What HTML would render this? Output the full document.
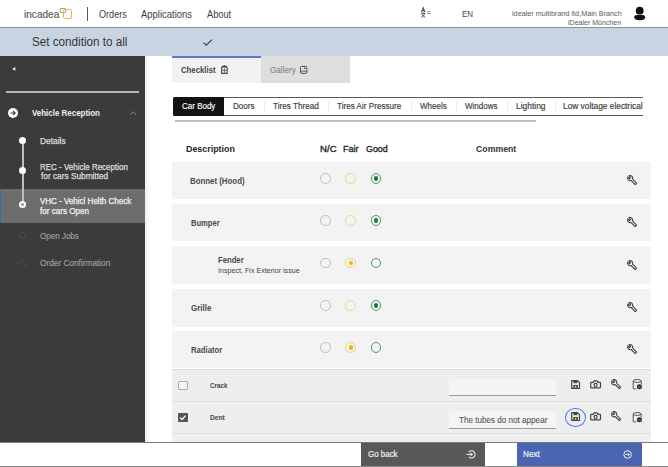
<!DOCTYPE html>
<html><head><meta charset="utf-8">
<style>
*{box-sizing:border-box;margin:0;padding:0}
html,body{width:668px;height:467px;overflow:hidden;background:#fff;font-family:"Liberation Sans",sans-serif;color:#333;position:relative}
.a{position:absolute}
.t{position:absolute;white-space:nowrap;line-height:1;transform-origin:0 0}
.row{position:absolute;left:172px;width:479px;background:#f3f3f3}
.radio{position:absolute;width:10.7px;height:10.7px;border-radius:50%;border:1.25px solid #bdbdbd}
.rg{border-color:#4a9f68}
.ry{border-color:#f0d47e}
.dot{position:absolute;left:2.3px;top:2.3px;width:4.6px;height:4.6px;border-radius:50%}
.sep{position:absolute;top:100.5px;width:1px;height:11px;background:#ebebeb}
svg{position:absolute;overflow:visible}
</style></head>
<body>
<!-- header -->
<div class="a" style="left:0;top:0;width:668px;height:27px;background:#fff"></div>
<div class="a" style="left:0;top:27px;width:668px;height:1px;background:#87919b"></div>
<div class="a" style="left:60px;top:7.6px;width:6px;height:5.2px;border:1px solid #a0a0a0;border-radius:1px"></div>
<div class="a" style="left:62.8px;top:9.3px;width:9.2px;height:9.4px;border:1.5px solid #f5b13c;border-radius:1.8px"></div>
<div class="a" style="left:87px;top:7px;width:1px;height:14px;background:#5a5a5a"></div>
<svg style="left:418px;top:5px" width="16" height="15" viewBox="418 5 16 15">
 <path d="M421.5 12 L423.2 7.8 L424.9 12 M422.2 10.6 H424.2" stroke="#505050" stroke-width="1.1" fill="none"/>
 <path d="M421.2 13.3 H425.3 M423.2 12.6 V13.3 M424.5 13.5 C424.1 15.5 423 16.6 421.3 17.3 M422 14.2 C422.6 15.6 423.6 16.6 425.3 17.3" stroke="#505050" stroke-width="1" fill="none"/>
 <path d="M427 11.7 H430.8 M427 13.5 H430.8" stroke="#777" stroke-width="0.8" fill="none"/>
</svg>
<svg style="left:630px;top:4px" width="20" height="20" viewBox="630 4 20 20"><circle cx="639.7" cy="10.7" r="3.9" fill="#111"/><path d="M634.2 17.3 Q634.2 15.1 637.2 15.1 H642.2 Q645.2 15.1 645.2 17.3 Q645.2 20.2 639.7 20.2 Q634.2 20.2 634.2 17.3Z" fill="#111"/></svg>

<!-- subheader -->
<div class="a" style="left:0;top:28px;width:668px;height:28px;background:#c9d4e2"></div>
<svg style="left:202.5px;top:38.5px" width="9.5" height="7" viewBox="0 0 9.5 7"><path d="M0.6 3.6 L3.3 6.2 L9 0.6" stroke="#3a3a3a" stroke-width="1.1" fill="none"/></svg>

<!-- sidebar -->
<div class="a" style="left:0;top:56px;width:145px;height:387px;background:#3b3b3b"></div>
<div class="a" style="left:0;top:442px;width:145px;height:1px;background:#1e1e1e"></div>
<div class="a" style="left:145px;top:56px;width:5px;height:387px;background:linear-gradient(to right,rgba(0,0,0,0.07),rgba(0,0,0,0))"></div>
<svg style="left:12px;top:67px" width="4" height="4" viewBox="0 0 4 4"><path d="M3.3 0 L0.2 1.9 L3.3 3.8Z" fill="#eee"/></svg>
<div class="a" style="left:6px;top:91.2px;width:133px;height:1.8px;background:#b8b8b8"></div>
<svg style="left:8px;top:107.8px" width="10" height="10" viewBox="0 0 10 10"><circle cx="5" cy="5" r="5" fill="#fff"/><path d="M2.4 5 H7.2 M5.1 2.9 L7.2 5 L5.1 7.1" stroke="#3b3b3b" stroke-width="1.1" fill="none"/></svg>
<svg style="left:130px;top:110.5px" width="7" height="4" viewBox="0 0 7 4"><path d="M0.6 3.4 L3.3 0.8 L6 3.4" stroke="#9a9a9a" stroke-width="0.9" fill="none"/></svg>

<div class="a" style="left:0;top:189px;width:145px;height:33.6px;background:#6d6d6d"></div>
<div class="a" style="left:0;top:189px;width:1.2px;height:33.6px;background:#2a6db5"></div>
<div class="a" style="left:21.5px;top:140px;width:2.1px;height:64px;background:#bdbdbd"></div>
<div class="a" style="left:18.8px;top:136.6px;width:7.4px;height:7.4px;border-radius:50%;background:#fff"></div>
<div class="a" style="left:18.8px;top:167px;width:7.4px;height:7.4px;border-radius:50%;background:#fff"></div>
<div class="a" style="left:19px;top:201.3px;width:7.2px;height:7.2px;border-radius:50%;background:#fff"></div>
<div class="a" style="left:21.1px;top:203.4px;width:3px;height:3px;border-radius:50%;background:#9a9a9a"></div>
<div class="a" style="left:19.2px;top:231.8px;width:7px;height:7px;border-radius:50%;border:1.3px solid #535353"></div>
<div class="a" style="left:19.2px;top:259.6px;width:7px;height:7px;border-radius:50%;border:1.3px dashed #535353"></div>

<!-- tabs -->
<div class="a" style="left:172px;top:56px;width:89px;height:27.4px;background:#f2f2f2"></div>
<div class="a" style="left:172px;top:56px;width:89px;height:1.7px;background:#5d7ac8"></div>
<svg style="left:219px;top:64px" width="11" height="11" viewBox="219 64 11 11"><path d="M221.6 73.4 V68.2 Q221.6 66 224.4 66 Q227.2 66 227.2 68.2 V73.4 Z" stroke="#4a4a4a" stroke-width="1.1" fill="none"/><path d="M222.4 67.2 Q224.4 65.6 226.4 67.2" stroke="#333" stroke-width="1.3" fill="none"/><path d="M224.4 67.5 V73.2 M221.8 70.2 H227" stroke="#555" stroke-width="0.8" fill="none"/></svg>
<div class="a" style="left:261px;top:56px;width:89px;height:27.4px;background:#dedede"></div>
<svg style="left:298px;top:64px" width="11" height="11" viewBox="298 64 11 11"><rect x="300.5" y="66.4" width="6.3" height="6.9" rx="1" stroke="#444" stroke-width="0.95" fill="none"/><circle cx="304.6" cy="68.3" r="0.75" fill="#333"/><path d="M300.8 72.3 L302.5 70.7 L304 71.7 L305.2 71 L306.5 71.9" stroke="#555" stroke-width="0.9" fill="none"/></svg>

<!-- chip bar -->
<div class="a" style="left:172.5px;top:97px;width:470px;height:18.6px;border-top:1px solid #5a5a5a;border-bottom:1px solid #5a5a5a;border-left:1px solid #5a5a5a;border-radius:2px 0 0 2px"></div>
<div class="a" style="left:172.5px;top:97px;width:51.5px;height:18.6px;background:#131313;border-radius:2px 0 0 2px"></div>
<div class="sep" style="left:264px"></div>
<div class="sep" style="left:327.5px"></div>
<div class="sep" style="left:411px"></div>
<div class="sep" style="left:456px"></div>
<div class="sep" style="left:507px"></div>
<div class="sep" style="left:554.5px"></div>
<div class="a" style="left:175px;top:120.3px;width:360.5px;height:1.6px;background:#bcbcbc"></div>

<!-- rows -->
<div class="row" style="top:162px;height:37px"></div>
<div class="row" style="top:204px;height:37px"></div>
<div class="row" style="top:246px;height:37.5px"></div>
<div class="row" style="top:289px;height:37.5px"></div>
<div class="row" style="top:331.2px;height:37px"></div>
<div class="a" style="left:172px;top:368.5px;width:479px;height:74.5px;background:#eeeeef"></div>
<div class="a" style="left:172px;top:368.5px;width:479px;height:1px;background:#dddddd"></div>
<div class="a" style="left:172px;top:401px;width:479px;height:1px;background:#dddddd"></div>
<div class="a" style="left:172px;top:433px;width:479px;height:1px;background:#dddddd"></div>

<!-- radios -->
<div class="radio" style="left:320.3px;top:173px"></div>
<div class="radio ry" style="left:345.4px;top:173px"></div>
<div class="radio rg" style="left:370.6px;top:173px"><div class="dot" style="background:#1f7a3c"></div></div>
<div class="radio" style="left:320.3px;top:215px"></div>
<div class="radio ry" style="left:345.4px;top:215px"></div>
<div class="radio rg" style="left:370.6px;top:215px"><div class="dot" style="background:#1f7a3c"></div></div>
<div class="radio" style="left:320.3px;top:257.5px"></div>
<div class="radio ry" style="left:345.4px;top:257.5px"><div class="dot" style="background:#f1b600"></div></div>
<div class="radio rg" style="left:370.6px;top:257.5px"></div>
<div class="radio" style="left:320.3px;top:300px"></div>
<div class="radio ry" style="left:345.4px;top:300px"></div>
<div class="radio rg" style="left:370.6px;top:300px"><div class="dot" style="background:#1f7a3c"></div></div>
<div class="radio" style="left:320.3px;top:342px"></div>
<div class="radio ry" style="left:345.4px;top:342px"><div class="dot" style="background:#f1b600"></div></div>
<div class="radio rg" style="left:370.6px;top:342px"></div>


<!-- checkboxes -->
<div class="a" style="left:178.3px;top:380.9px;width:9.6px;height:8.8px;border:1.2px solid #acacac;border-radius:1px;background:#f4f4f4"></div>
<div class="a" style="left:178.3px;top:413px;width:9.6px;height:9px;background:#555;border-radius:1px"></div>
<svg style="left:178.3px;top:413px" width="9.6" height="9" viewBox="0 0 9.6 9"><path d="M2 4.6 L4 6.5 L7.6 2.6" stroke="#fff" stroke-width="1.3" fill="none"/></svg>

<!-- inputs -->
<div class="a" style="left:448.5px;top:379px;width:107.5px;height:17px;background:#f5f5f5;border-bottom:1px solid #9a9a9a"></div>
<div class="a" style="left:448.5px;top:411px;width:107.5px;height:17.5px;background:#f5f5f5;border-bottom:1px solid #9a9a9a"></div>

<!-- blue focus ring -->
<div class="a" style="left:565px;top:408px;width:20.5px;height:19px;border:1.8px solid #3b7ff0;border-radius:50%"></div>

<!-- ICONS -->
<svg style="left:627px;top:175.0px" width="10.3" height="10.3" viewBox="0 0 24 24"><path d="M21.8 18.6 L13 9.8 C13.9 7.6 13.4 5 11.6 3.2 C9.7 1.3 6.9 0.9 4.6 1.9 L8.6 5.9 L5.9 8.6 L1.9 4.6 C0.8 6.9 1.3 9.7 3.2 11.6 C5 13.4 7.6 13.9 9.8 13 L18.6 21.8 C19 22.2 19.6 22.2 20 21.8 L21.8 20 C22.2 19.6 22.2 19 21.8 18.6 Z" stroke="#383838" stroke-width="2.4" fill="none" stroke-linejoin="round"/></svg>
<svg style="left:627px;top:217.0px" width="10.3" height="10.3" viewBox="0 0 24 24"><path d="M21.8 18.6 L13 9.8 C13.9 7.6 13.4 5 11.6 3.2 C9.7 1.3 6.9 0.9 4.6 1.9 L8.6 5.9 L5.9 8.6 L1.9 4.6 C0.8 6.9 1.3 9.7 3.2 11.6 C5 13.4 7.6 13.9 9.8 13 L18.6 21.8 C19 22.2 19.6 22.2 20 21.8 L21.8 20 C22.2 19.6 22.2 19 21.8 18.6 Z" stroke="#383838" stroke-width="2.4" fill="none" stroke-linejoin="round"/></svg>
<svg style="left:627px;top:259.5px" width="10.3" height="10.3" viewBox="0 0 24 24"><path d="M21.8 18.6 L13 9.8 C13.9 7.6 13.4 5 11.6 3.2 C9.7 1.3 6.9 0.9 4.6 1.9 L8.6 5.9 L5.9 8.6 L1.9 4.6 C0.8 6.9 1.3 9.7 3.2 11.6 C5 13.4 7.6 13.9 9.8 13 L18.6 21.8 C19 22.2 19.6 22.2 20 21.8 L21.8 20 C22.2 19.6 22.2 19 21.8 18.6 Z" stroke="#383838" stroke-width="2.4" fill="none" stroke-linejoin="round"/></svg>
<svg style="left:627px;top:302.0px" width="10.3" height="10.3" viewBox="0 0 24 24"><path d="M21.8 18.6 L13 9.8 C13.9 7.6 13.4 5 11.6 3.2 C9.7 1.3 6.9 0.9 4.6 1.9 L8.6 5.9 L5.9 8.6 L1.9 4.6 C0.8 6.9 1.3 9.7 3.2 11.6 C5 13.4 7.6 13.9 9.8 13 L18.6 21.8 C19 22.2 19.6 22.2 20 21.8 L21.8 20 C22.2 19.6 22.2 19 21.8 18.6 Z" stroke="#383838" stroke-width="2.4" fill="none" stroke-linejoin="round"/></svg>
<svg style="left:627px;top:344.0px" width="10.3" height="10.3" viewBox="0 0 24 24"><path d="M21.8 18.6 L13 9.8 C13.9 7.6 13.4 5 11.6 3.2 C9.7 1.3 6.9 0.9 4.6 1.9 L8.6 5.9 L5.9 8.6 L1.9 4.6 C0.8 6.9 1.3 9.7 3.2 11.6 C5 13.4 7.6 13.9 9.8 13 L18.6 21.8 C19 22.2 19.6 22.2 20 21.8 L21.8 20 C22.2 19.6 22.2 19 21.8 18.6 Z" stroke="#383838" stroke-width="2.4" fill="none" stroke-linejoin="round"/></svg>
<svg style="left:570.6px;top:379.6px" width="9.2" height="9.2" viewBox="0 0 16 16"><path d="M1.2 1.2 H11.4 L14.8 4.6 V14.8 H1.2 Z" stroke="#444" stroke-width="2.1" fill="none" stroke-linejoin="round"/><rect x="4.3" y="1.2" width="6.8" height="4.3" fill="#444"/><rect x="3.9" y="8.7" width="8.2" height="6.1" fill="#444"/><rect x="6.7" y="10.6" width="2.6" height="2.6" fill="#eee"/></svg>
<svg style="left:589.9px;top:379.5px" width="11.2" height="8.4" viewBox="0 0 16 12"><path d="M1.9 3.4 H4.6 L5.9 1.2 H10.1 L11.4 3.4 H14.1 Q15 3.4 15 4.3 V10.5 Q15 11.3 14.1 11.3 H1.9 Q1 11.3 1 10.5 V4.3 Q1 3.4 1.9 3.4 Z" stroke="#444" stroke-width="1.7" fill="none" stroke-linejoin="round"/><circle cx="8" cy="7.1" r="2.2" stroke="#444" stroke-width="1.7" fill="none"/></svg>
<svg style="left:610.8px;top:379.0px" width="10.4" height="10.4" viewBox="0 0 24 24"><path d="M21.8 18.6 L13 9.8 C13.9 7.6 13.4 5 11.6 3.2 C9.7 1.3 6.9 0.9 4.6 1.9 L8.6 5.9 L5.9 8.6 L1.9 4.6 C0.8 6.9 1.3 9.7 3.2 11.6 C5 13.4 7.6 13.9 9.8 13 L18.6 21.8 C19 22.2 19.6 22.2 20 21.8 L21.8 20 C22.2 19.6 22.2 19 21.8 18.6 Z" stroke="#383838" stroke-width="2.4" fill="none" stroke-linejoin="round"/></svg>
<svg style="left:631.6px;top:379.1px" width="10.4" height="10.4" viewBox="0 0 16 16"><path d="M1.8 3.2 V14.6 Q1.8 15.2 2.4 15.2 H6.6" stroke="#444" stroke-width="1.4" fill="none"/><path d="M14.2 3.2 V8.4" stroke="#444" stroke-width="1.4" fill="none"/><ellipse cx="8" cy="3" rx="6.2" ry="2.2" stroke="#444" stroke-width="1.4" fill="none"/><circle cx="11.4" cy="12" r="3.9" fill="#2a2a2a"/><ellipse cx="11.4" cy="12" rx="2.3" ry="1.3" fill="#7a7a7a"/><circle cx="11.4" cy="12" r="0.8" fill="#2a2a2a"/></svg>
<svg style="left:570.6px;top:412.0px" width="9.2" height="9.2" viewBox="0 0 16 16"><path d="M1.2 1.2 H11.4 L14.8 4.6 V14.8 H1.2 Z" stroke="#444" stroke-width="2.1" fill="none" stroke-linejoin="round"/><rect x="4.3" y="1.2" width="6.8" height="4.3" fill="#444"/><rect x="3.9" y="8.7" width="8.2" height="6.1" fill="#444"/><rect x="6.7" y="10.6" width="2.6" height="2.6" fill="#eee"/></svg>
<svg style="left:589.9px;top:411.9px" width="11.2" height="8.4" viewBox="0 0 16 12"><path d="M1.9 3.4 H4.6 L5.9 1.2 H10.1 L11.4 3.4 H14.1 Q15 3.4 15 4.3 V10.5 Q15 11.3 14.1 11.3 H1.9 Q1 11.3 1 10.5 V4.3 Q1 3.4 1.9 3.4 Z" stroke="#444" stroke-width="1.7" fill="none" stroke-linejoin="round"/><circle cx="8" cy="7.1" r="2.2" stroke="#444" stroke-width="1.7" fill="none"/></svg>
<svg style="left:610.8px;top:411.4px" width="10.4" height="10.4" viewBox="0 0 24 24"><path d="M21.8 18.6 L13 9.8 C13.9 7.6 13.4 5 11.6 3.2 C9.7 1.3 6.9 0.9 4.6 1.9 L8.6 5.9 L5.9 8.6 L1.9 4.6 C0.8 6.9 1.3 9.7 3.2 11.6 C5 13.4 7.6 13.9 9.8 13 L18.6 21.8 C19 22.2 19.6 22.2 20 21.8 L21.8 20 C22.2 19.6 22.2 19 21.8 18.6 Z" stroke="#383838" stroke-width="2.4" fill="none" stroke-linejoin="round"/></svg>
<svg style="left:631.6px;top:411.5px" width="10.4" height="10.4" viewBox="0 0 16 16"><path d="M1.8 3.2 V14.6 Q1.8 15.2 2.4 15.2 H6.6" stroke="#444" stroke-width="1.4" fill="none"/><path d="M14.2 3.2 V8.4" stroke="#444" stroke-width="1.4" fill="none"/><ellipse cx="8" cy="3" rx="6.2" ry="2.2" stroke="#444" stroke-width="1.4" fill="none"/><circle cx="11.4" cy="12" r="3.9" fill="#2a2a2a"/><ellipse cx="11.4" cy="12" rx="2.3" ry="1.3" fill="#7a7a7a"/><circle cx="11.4" cy="12" r="0.8" fill="#2a2a2a"/></svg>


<!-- footer -->
<div class="a" style="left:0;top:442px;width:668px;height:1px;background:#7a7a7a"></div>
<div class="a" style="left:0;top:443px;width:668px;height:23px;background:#fff"></div>
<div class="a" style="left:0;top:466px;width:668px;height:1px;background:#8a8a8a"></div>
<div class="a" style="left:361px;top:443px;width:124px;height:23px;background:#565859"></div>
<div class="a" style="left:517px;top:443px;width:124.5px;height:23px;background:#4a66b3"></div>
<svg style="left:464px;top:448px" width="13" height="13" viewBox="464 448 13 13"><path d="M468.9 451.9 A3.6 3.6 0 1 1 468.9 456.9" stroke="#eee" stroke-width="1.1" fill="none"/><path d="M466.6 454.4 H471" stroke="#eee" stroke-width="1.1" fill="none"/><path d="M470.6 452.5 L473.2 454.4 L470.6 456.3 Z" fill="#eee"/></svg>
<svg style="left:621px;top:448px" width="13" height="13" viewBox="621 448 13 13"><circle cx="627.6" cy="454.5" r="3.8" stroke="#eee" stroke-width="1" fill="none"/><path d="M625.3 454.5 H629.2 M627.9 453 L629.5 454.5 L627.9 456" stroke="#eee" stroke-width="0.9" fill="none"/></svg>

<div class="t" style="left:23.53px;top:9px;font-size:10.8px;font-weight:400;color:#5f5f5f;transform:scaleX(0.933);-webkit-text-stroke:0.2px #5f5f5f;">incadea</div>
<div class="t" style="left:98.68px;top:10px;font-size:10.3px;font-weight:400;color:#3d3d3d;transform:scaleX(0.884);">Orders</div>
<div class="t" style="left:141.00px;top:10px;font-size:10.3px;font-weight:400;color:#3d3d3d;transform:scaleX(0.919);">Applications</div>
<div class="t" style="left:206.60px;top:10px;font-size:10.3px;font-weight:400;color:#3d3d3d;transform:scaleX(0.896);">About</div>
<div class="t" style="left:462.22px;top:10px;font-size:8.3px;font-weight:400;color:#4a4a4a;transform:scaleX(0.967);-webkit-text-stroke:0.05px #4a4a4a;">EN</div>
<div class="t" style="left:511.75px;top:10px;font-size:7.2px;font-weight:400;color:#5a5a5a;transform:scaleX(1.006);">idealer multibrand ltd,Main Branch</div>
<div class="t" style="left:568.16px;top:19px;font-size:7.2px;font-weight:400;color:#5a5a5a;transform:scaleX(0.979);">iDealer München</div>
<div class="t" style="left:31.53px;top:36px;font-size:12.5px;font-weight:400;color:#333;transform:scaleX(0.934);">Set condition to all</div>
<div class="t" style="left:32.20px;top:109px;font-size:8.3px;font-weight:700;color:#eee;transform:scaleX(0.957);">Vehicle Reception</div>
<div class="t" style="left:39.99px;top:138px;font-size:8.2px;font-weight:400;color:#ddd;transform:scaleX(1.024);-webkit-text-stroke:0.25px #ddd;">Details</div>
<div class="t" style="left:40.01px;top:164px;font-size:8.2px;font-weight:400;color:#ddd;transform:scaleX(0.975);-webkit-text-stroke:0.25px #ddd;">REC - Vehicle Reception</div>
<div class="t" style="left:40.50px;top:173px;font-size:8.2px;font-weight:400;color:#ddd;transform:scaleX(1.011);-webkit-text-stroke:0.25px #ddd;">for cars Submitted</div>
<div class="t" style="left:40.30px;top:198px;font-size:8.2px;font-weight:400;color:#f2f2f2;transform:scaleX(0.978);-webkit-text-stroke:0.25px #f2f2f2;">VHC - Vehicl Helth Check</div>
<div class="t" style="left:40.30px;top:208px;font-size:8.2px;font-weight:400;color:#f2f2f2;transform:scaleX(0.989);-webkit-text-stroke:0.25px #f2f2f2;">for cars Open</div>
<div class="t" style="left:40.25px;top:233px;font-size:8.2px;font-weight:400;color:#9a9a9a;transform:scaleX(0.981);-webkit-text-stroke:0.2px #9a9a9a;">Open Jobs</div>
<div class="t" style="left:40.25px;top:260px;font-size:8.2px;font-weight:400;color:#9a9a9a;transform:scaleX(1.010);-webkit-text-stroke:0.2px #9a9a9a;">Order Confirmation</div>
<div class="t" style="left:181.28px;top:66px;font-size:8.7px;font-weight:700;color:#444;transform:scaleX(0.894);">Checklist</div>
<div class="t" style="left:270.17px;top:66px;font-size:8.7px;font-weight:400;color:#8a8a8a;transform:scaleX(0.938);-webkit-text-stroke:0.15px #8a8a8a;">Gallery</div>
<div class="t" style="left:181.76px;top:102px;font-size:8.5px;font-weight:400;color:#fff;transform:scaleX(0.942);-webkit-text-stroke:0.15px #fff;">Car Body</div>
<div class="t" style="left:233.12px;top:102px;font-size:8.5px;font-weight:400;color:#3a3a3a;transform:scaleX(0.950);-webkit-text-stroke:0.15px #3a3a3a;">Doors</div>
<div class="t" style="left:273.10px;top:102px;font-size:8.5px;font-weight:400;color:#3a3a3a;transform:scaleX(0.960);-webkit-text-stroke:0.15px #3a3a3a;">Tires Thread</div>
<div class="t" style="left:337.20px;top:102px;font-size:8.5px;font-weight:400;color:#3a3a3a;transform:scaleX(0.957);-webkit-text-stroke:0.15px #3a3a3a;">Tires Air Pressure</div>
<div class="t" style="left:419.70px;top:102px;font-size:8.5px;font-weight:400;color:#3a3a3a;transform:scaleX(0.945);-webkit-text-stroke:0.15px #3a3a3a;">Wheels</div>
<div class="t" style="left:465.00px;top:102px;font-size:8.5px;font-weight:400;color:#3a3a3a;transform:scaleX(0.945);-webkit-text-stroke:0.15px #3a3a3a;">Windows</div>
<div class="t" style="left:516.20px;top:102px;font-size:8.5px;font-weight:400;color:#3a3a3a;transform:scaleX(0.993);-webkit-text-stroke:0.15px #3a3a3a;">Lighting</div>
<div class="t" style="left:563.31px;top:102px;font-size:8.5px;font-weight:400;color:#3a3a3a;transform:scaleX(0.980);-webkit-text-stroke:0.15px #3a3a3a;">Low voltage electrical</div>
<div class="t" style="left:186.34px;top:145px;font-size:8.7px;font-weight:700;color:#222;transform:scaleX(1.022);">Description</div>
<div class="t" style="left:319.83px;top:145px;font-size:8.5px;font-weight:400;color:#222;transform:scaleX(1.136);-webkit-text-stroke:0.3px #222;">N/C</div>
<div class="t" style="left:342.97px;top:145px;font-size:8.5px;font-weight:400;color:#222;transform:scaleX(1.067);-webkit-text-stroke:0.3px #222;">Fair</div>
<div class="t" style="left:366.04px;top:145px;font-size:8.5px;font-weight:400;color:#222;transform:scaleX(1.047);-webkit-text-stroke:0.3px #222;">Good</div>
<div class="t" style="left:475.55px;top:145px;font-size:8.7px;font-weight:700;color:#333;transform:scaleX(1.005);">Comment</div>
<div class="t" style="left:190.46px;top:177px;font-size:8.3px;font-weight:700;color:#4a4a4a;transform:scaleX(0.947);">Bonnet (Hood)</div>
<div class="t" style="left:190.67px;top:219px;font-size:8.3px;font-weight:700;color:#4a4a4a;transform:scaleX(0.915);">Bumper</div>
<div class="t" style="left:217.97px;top:256px;font-size:8.3px;font-weight:700;color:#4a4a4a;transform:scaleX(0.927);">Fender</div>
<div class="t" style="left:217.69px;top:267px;font-size:7px;font-weight:400;color:#444;transform:scaleX(1.019);">Inspect, Fix Exterior issue</div>
<div class="t" style="left:190.66px;top:304px;font-size:8.3px;font-weight:700;color:#4a4a4a;transform:scaleX(0.962);">Grille</div>
<div class="t" style="left:190.67px;top:346px;font-size:8.3px;font-weight:700;color:#4a4a4a;transform:scaleX(0.928);">Radiator</div>
<div class="t" style="left:210.20px;top:382px;font-size:7.3px;font-weight:700;color:#444;transform:scaleX(0.859);">Crack</div>
<div class="t" style="left:209.97px;top:414px;font-size:7.3px;font-weight:700;color:#444;transform:scaleX(0.906);">Dent</div>
<div class="t" style="left:458.60px;top:416px;font-size:8.4px;font-weight:400;color:#555;transform:scaleX(0.968);-webkit-text-stroke:0.1px #555;">The tubes do not appear</div>
<div class="t" style="left:367.66px;top:450px;font-size:8.4px;font-weight:400;color:#eee;transform:scaleX(0.948);-webkit-text-stroke:0.2px #eee;">Go back</div>
<div class="t" style="left:523.41px;top:450px;font-size:8.4px;font-weight:400;color:#eee;transform:scaleX(0.973);-webkit-text-stroke:0.2px #eee;">Next</div>
</body></html>
